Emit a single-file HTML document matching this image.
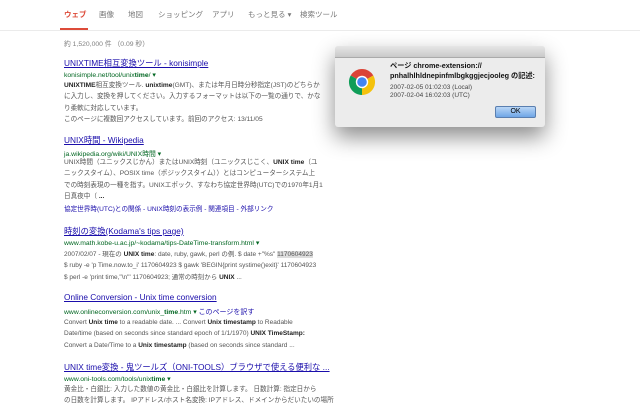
<!DOCTYPE html><html><head><meta charset="utf-8"><style>
body{margin:0;width:640px;height:400px;overflow:hidden;background:#fff;font-family:"Liberation Sans","Noto Sans CJK JP",sans-serif;position:relative}
.a{position:absolute;white-space:nowrap}
.nav{top:9px;font-size:7.5px;color:#777}
.t{font-size:8.3px;color:#1a0dab;text-decoration:underline;left:64px}
.u{font-size:6.8px;color:#006621;left:64px}
.s{font-size:6.6px;color:#545454;left:64px;line-height:11.3px;white-space:nowrap}
.s b{color:#222}
.l{font-size:6.5px}
</style></head><body>
<div class="a nav" style="left:64px;color:#dd4b39;font-weight:bold">ウェブ</div>
<div class="a nav" style="left:99px">画像</div>
<div class="a nav" style="left:128px">地図</div>
<div class="a nav" style="left:158px">ショッピング</div>
<div class="a nav" style="left:212px">アプリ</div>
<div class="a nav" style="left:248px">もっと見る ▾</div>
<div class="a nav" style="left:300px">検索ツール</div>
<div class="a" style="left:60px;top:28px;width:28px;height:2px;background:#dd4b39"></div>
<div class="a" style="left:0;top:30px;width:640px;height:1px;background:#ebebeb"></div>
<div class="a" style="left:64px;top:38px;font-size:6.8px;color:#808080">約 1,520,000 件 （0.09 秒）</div>

<div class="a t" style="top:57px">UNIXTIME相互変換ツール - konisimple</div>
<div class="a u" style="top:71px">konisimple.net/tool/unix<b>time</b>/ ▾</div>
<div class="a s" style="top:80px"><b>UNIXTIME</b>相互変換ツール. <b>unixtime</b>(GMT)、または年月日時分秒指定(JST)のどちらか<br>に入力し、変換を押してください。入力するフォーマットは以下の一覧の通りで、かな<br>り柔軟に対応しています。<br>このページに複数回アクセスしています。前回のアクセス: 13/11/05</div>

<div class="a t" style="top:134px">UNIX時間 - Wikipedia</div>
<div class="a u" style="top:148px">ja.wikipedia.org/wiki/UNIX時間 ▾</div>
<div class="a s" style="top:157px">UNIX時間（ユニックスじかん）またはUNIX時刻（ユニックスじこく、<b>UNIX time</b>（ユ<br>ニックスタイム）、POSIX time（ポジックスタイム））とはコンピューターシステム上<br>での時刻表現の一種を指す。UNIXエポック、すなわち協定世界時(UTC)での1970年1月1<br>日真夜中（ <b>...</b></div>
<div class="a" style="left:64px;top:203px;font-size:6.6px;color:#1a0dab">協定世界時(UTC)との関係 - UNIX時刻の表示例 - 関連項目 - 外部リンク</div>

<div class="a t" style="top:225px">時刻の変換(Kodama's tips page)</div>
<div class="a u" style="top:239px">www.math.kobe-u.ac.jp/~kodama/tips-DateTime-transform.html ▾</div>
<div class="a s l" style="top:249px">2007/02/07 - 現在の <b>UNIX time</b>: date, ruby, gawk, perl の例. $ date +"%s" <span style="background:#ddd">1170604923</span><br>$ ruby -e 'p Time.now.to_i' 1170604923 $ gawk 'BEGIN{print systime()exit}' 1170604923<br>$ perl -e 'print time,"\n"' 1170604923; 通常の時刻から <b>UNIX</b> ...</div>

<div class="a t" style="top:292px">Online Conversion - Unix time conversion</div>
<div class="a u" style="top:307px">www.onlineconversion.com/unix_<b>time</b>.htm ▾ <span style="color:#1a0dab;font-size:7px">このページを訳す</span></div>
<div class="a s l" style="top:317px">Convert <b>Unix time</b> to a readable date. ... Convert <b>Unix timestamp</b> to Readable<br>Date/time (based on seconds since standard epoch of 1/1/1970) <b>UNIX TimeStamp:</b><br>Convert a Date/Time to a <b>Unix timestamp</b> (based on seconds since standard ...</div>

<div class="a t" style="top:361px">UNIX time変換 - 鬼ツールズ（ONI-TOOLS）ブラウザで使える便利な ...</div>
<div class="a u" style="top:375px">www.oni-tools.com/tools/unix<b>time</b> ▾</div>
<div class="a s" style="top:384px">黄金比・白銀比: 入力した数値の黄金比・白銀比を計算します。 日数計算: 指定日から<br>の日数を計算します。 IPアドレス/ホスト名変換: IPアドレス、ドメインからだいたいの場所</div>

<div class="a" style="left:335px;top:46px;width:210px;height:81px;background:#ececec;border-radius:3px;box-shadow:0 10px 22px rgba(0,0,0,.45)">
<div style="height:11px;background:linear-gradient(#e6e6e6,#c9c9c9);border-radius:3px 3px 0 0;border-bottom:1px solid #aaa"></div>
<svg class="a" style="left:13px;top:22px" width="28" height="28" viewBox="0 0 28 28">
<path d="M14 14 L14 1 A13 13 0 0 1 25.3 7.5 Z" fill="#db4437"/>
<path d="M14 14 L2.7 7.5 A13 13 0 0 1 14 1 Z" fill="#db4437"/>
<path d="M14 14 L25.3 7.5 A13 13 0 0 1 14 27 Z" fill="#f4c20d"/>
<path d="M14 14 L14 27 A13 13 0 0 1 2.7 7.5 Z" fill="#0f9d58"/>
<circle cx="14" cy="14" r="6.2" fill="#fff"/><circle cx="14" cy="14" r="4.8" fill="#4285f4"/></svg>
<div class="a" style="left:55px;top:15px;font-size:7.2px;font-weight:bold;color:#111;line-height:10px">ページ chrome-extension://<br>pnhalhlhldnepinfmlbgkggjecjooleg の記述:</div>
<div class="a" style="left:55px;top:38px;font-size:6.5px;color:#444;line-height:7.5px">2007-02-05 01:02:03 (Local)<br>2007-02-04 16:02:03 (UTC)</div>
<div class="a" style="left:160px;top:60px;width:39px;height:10px;border:1px solid #5a7fb0;border-radius:2px;background:linear-gradient(#b9d6f6,#6fa6e6);font-size:7px;text-align:center;line-height:10px;color:#000">OK</div>
</div>
</body></html>
